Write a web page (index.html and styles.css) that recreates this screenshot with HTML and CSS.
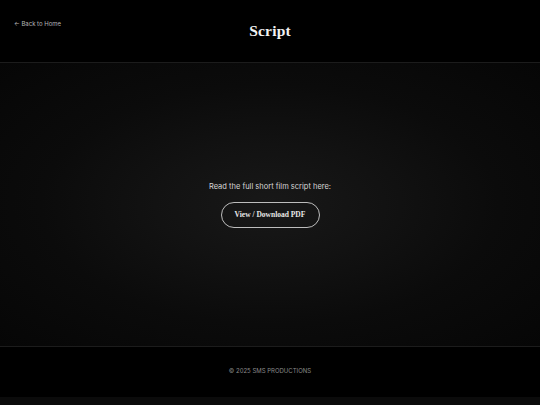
FILE: index.html
```html
<!DOCTYPE html>
<html lang="en">
<head>
<meta charset="utf-8">
<title>Script</title>
<link rel="stylesheet" href="styles.css">
</head>
<body>
<div class="page">
  <header class="header">
    <a class="back" href="#">← Back to Home</a>
    <h1 class="title">Script</h1>
  </header>
  <main class="main">
    <p class="lead">Read the full short film script here:</p>
    <a class="btn" href="#">View / Download PDF</a>
  </main>
  <footer class="footer">
    <p class="copy">© 2025 SMS PRODUCTIONS</p>
  </footer>
</div>
</body>
</html>
```
FILE: styles.css
```css
html, body {
  margin: 0;
  padding: 0;
  background: #0b0b0b;
  font-family: Inter, "Liberation Sans", sans-serif;
  color: #ddd;
}
.page {
  display: flex;
  flex-direction: column;
  height: 397px;
}
.header {
  position: relative;
  height: 62px;
  background: #000;
  border-bottom: 1px solid #1c1c1c;
  display: flex;
  align-items: center;
  justify-content: center;
}
.back {
  position: absolute;
  left: 14px;
  top: 20px;
  font-size: 6px;
  color: #b5b5b5;
  text-decoration: none;
}
.title {
  margin: 0;
  font-family: "Liberation Serif", serif;
  font-weight: bold;
  font-size: 15.5px;
  color: #f2f2f2;
  letter-spacing: 0.2px;
}
.main {
  flex: 1;
  display: flex;
  flex-direction: column;
  align-items: center;
  justify-content: center;
  gap: 11px;
  background: radial-gradient(ellipse farthest-corner at 50% 50%, #181818 0%, #121212 30%, #0b0b0b 60%, #060606 100%);
}
.lead {
  margin: 0;
  font-size: 7.5px;
  color: #d6d6d6;
}
.btn {
  display: inline-flex;
  align-items: center;
  justify-content: center;
  width: 97px;
  height: 24px;
  border: 1px solid #bdbdbd;
  border-radius: 14px;
  font-family: "Liberation Serif", serif;
  font-weight: bold;
  font-size: 7.5px;
  color: #e8e8e8;
  text-decoration: none;
}
.footer {
  height: 50px;
  background: #000;
  border-top: 1px solid #1c1c1c;
  display: flex;
  align-items: center;
  justify-content: center;
}
.copy {
  margin: 0 0 3px;
  font-size: 6px;
  color: #8a8a8a;
}
```
